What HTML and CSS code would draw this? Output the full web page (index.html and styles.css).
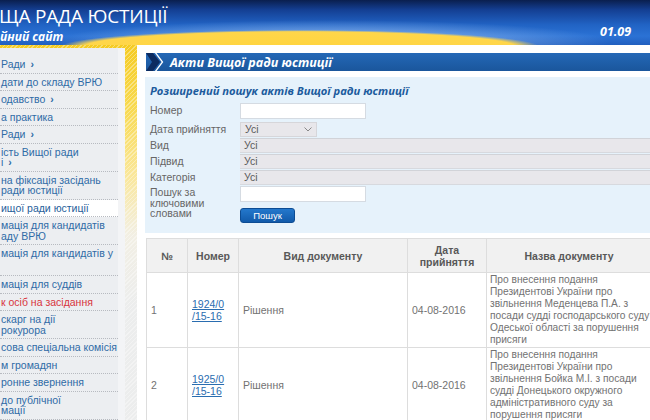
FILE: index.html
```html
<!DOCTYPE html>
<html lang="uk">
<head>
<meta charset="utf-8">
<title>Акти Вищої ради юстиції</title>
<link rel="stylesheet" href="styles.css">
</head>
<body>
<header class="header">
  <div class="brand">
    <div class="title">ЩА РАДА ЮСТИЦІЇ</div>
    <div class="subtitle">йний сайт</div>
  </div>
  <div class="date">01.09</div>
</header>
<div class="layout">
  <nav class="sidebar">
    <ul class="nav">
      <li>Ради <b>›</b></li>
      <li>дати до складу ВРЮ</li>
      <li>одавство <b>›</b></li>
      <li>а практика</li>
      <li>Ради <b>›</b></li>
      <li>ість Вищої ради<br>і <b>›</b></li>
      <li>на фіксація засідань<br>ради юстиції</li>
      <li class="active">ищої ради юстиції</li>
      <li>мація для кандидатів<br>аду ВРЮ</li>
      <li class="tall">мація для кандидатів у<br>&nbsp;</li>
      <li>мація для суддів</li>
      <li class="red">к осіб на засідання</li>
      <li>скарг на дії<br>рокурора</li>
      <li>сова спеціальна комісія</li>
      <li>м громадян</li>
      <li>ронне звернення</li>
      <li>до публічної<br>мації</li>
    </ul>
  </nav>
  <main class="main">
    <div class="titlebar">
      <svg class="chev" width="18" height="18" viewBox="0 0 18 18"><polygon points="0,0 7,0 14,9 7,18 0,18 6,9" fill="#0c2b60"/><polyline points="9,-1 16.5,9 9,19" fill="none" stroke="#ffffff" stroke-width="1.3"/></svg>
      <span class="titlebar-text">Акти Вищої ради юстиції</span>
    </div>
    <section class="search">
      <h2 class="search-title">Розширений пошук актів Вищої ради юстиції</h2>
      <div class="row row-first">
        <div class="label">Номер</div>
        <div class="input short"></div>
      </div>
      <div class="row row-date">
        <div class="label">Дата прийняття</div>
        <div class="select short-select">Усі<svg class="caret" width="8" height="5" viewBox="0 0 8 5"><polyline points="0.5,0.5 4,4 7.5,0.5" fill="none" stroke="#888" stroke-width="1"/></svg></div>
      </div>
      <div class="row">
        <div class="label">Вид</div>
        <div class="select wide">Усі</div>
      </div>
      <div class="row">
        <div class="label">Підвид</div>
        <div class="select wide">Усі</div>
      </div>
      <div class="row">
        <div class="label">Категорія</div>
        <div class="select wide">Усі</div>
      </div>
      <div class="row row-keywords">
        <div class="label label-multi">Пошук за<br>ключовими<br>словами</div>
        <div class="controls">
          <div class="input short"></div>
          <div class="button">Пошук</div>
        </div>
      </div>
    </section>
    <table class="acts">
      <colgroup>
        <col class="c-num"><col class="c-id"><col class="c-kind"><col class="c-date"><col class="c-name">
      </colgroup>
      <thead>
        <tr>
          <th>№</th>
          <th>Номер</th>
          <th>Вид документу</th>
          <th>Дата<br>прийняття</th>
          <th>Назва документу</th>
        </tr>
      </thead>
      <tbody>
        <tr>
          <td>1</td>
          <td><a class="doc-link" href="#">1924/0<br>/15-16</a></td>
          <td>Рішення</td>
          <td>04-08-2016</td>
          <td class="name">Про внесення подання<br>Президентові України про<br>звільнення Меденцева П.А. з<br>посади судді господарського суду<br>Одеської області за порушення<br>присяги</td>
        </tr>
        <tr>
          <td>2</td>
          <td><a class="doc-link" href="#">1925/0<br>/15-16</a></td>
          <td>Рішення</td>
          <td>04-08-2016</td>
          <td class="name">Про внесення подання<br>Президентові України про<br>звільнення Бойка М.І. з посади<br>судді Донецького окружного<br>адміністративного суду за<br>порушення присяги</td>
        </tr>
      </tbody>
    </table>
  </main>
</div>
</body>
</html>
```
FILE: styles.css
```css
html, body {
  margin: 0;
  padding: 0;
  overflow: hidden;
}
body {
  width: 650px;
  height: 420px;
  font-family: "Liberation Sans", Arial, sans-serif;
  font-size: 10.5px;
  background: #ffffff;
}

/* Header */
.header {
  height: 45px;
  display: flex;
  overflow: hidden;
  color: #ffffff;
  background:
    radial-gradient(ellipse 240px 17px at 300px 47px, #ffd43d 0, #ffd64a 90%, rgba(255, 214, 74, 0) 100%),
    radial-gradient(ellipse 280px 22px at 330px 42px, rgba(200, 225, 255, 0.75) 0, rgba(200, 225, 255, 0) 100%),
    linear-gradient(180deg, #0a1f4e 0, #143f93 22%, #2163c4 55%, #2b72d5 80%, #215fbf 100%);
}
.brand {
  flex: 0 0 600px;
  padding-top: 4px;
}
.title {
  font-family: "Open Sans", "Liberation Sans", sans-serif;
  font-size: 19px;
  line-height: 24px;
  margin-left: -1px;
  letter-spacing: -0.2px;
}
.subtitle {
  margin-top: 2px;
  font-family: "Open Sans", "Liberation Sans", sans-serif;
  font-weight: 700;
  font-style: italic;
  font-size: 12px;
  line-height: 13px;
}
.date {
  padding-top: 23px;
  font-family: "Open Sans", "Liberation Sans", sans-serif;
  font-weight: 700;
  font-style: italic;
  font-size: 12.5px;
  white-space: nowrap;
}

/* Layout */
.layout {
  display: flex;
  align-items: flex-start;
  height: 375px;
  background:
    repeating-linear-gradient(135deg, rgba(255, 255, 255, 0.35) 0 1px, rgba(255, 255, 255, 0) 1px 3px),
    linear-gradient(180deg, #f5cb22 0, #f8d94e 60px, #fae79a 130px, #f2efe4 190px, #eceded 260px);
}
.sidebar {
  flex: 0 0 125px;
  margin-top: 3px;
  height: 372px;
  background:
    linear-gradient(90deg, #eceef1 0, #eceef1 118px, #f3f4f6 118px);
}
.nav {
  list-style: none;
  margin: 0;
  padding: 8px 0 0;
  width: 118px;
}
.nav li {
  padding: 3px 0 3px 1px;
  line-height: 10.5px;
  font-size: 10.5px;
  color: #2f6ba6;
  border-bottom: 1px dotted #b7bac0;
  white-space: nowrap;
  overflow: hidden;
}
.nav li.tall {
  padding-bottom: 6px;
}
.nav li b {
  font-weight: 700;
  padding-left: 2px;
}
.nav li.active {
  background: #ffffff;
  color: #27609a;
}
.nav li.red {
  color: #d8343c;
}

.main {
  flex: 1;
  margin-left: 12px;
  height: 375px;
  background: #ffffff;
  padding: 8px 0 0 9px;
  overflow: hidden;
}

/* Title bar */
.titlebar {
  height: 18px;
  display: flex;
  align-items: center;
  background: linear-gradient(180deg, #2468b6 0, #1a569c 100%);
}
.chev {
  flex: 0 0 18px;
  display: block;
}
.titlebar-text {
  margin-left: 6px;
  font-family: "Open Sans", "Liberation Sans", sans-serif;
  font-weight: 700;
  font-style: italic;
  font-size: 12.5px;
  color: #ffffff;
  white-space: nowrap;
}

/* Search panel */
.search {
  margin-top: 6px;
  margin-left: -1px;
  background: #e6f2fb;
  padding: 7px 0 9px 5px;
}
.search-title {
  margin: 0 0 5px;
  font-family: "Open Sans", "Liberation Sans", sans-serif;
  font-weight: 700;
  font-style: italic;
  font-size: 11.2px;
  line-height: 14px;
  color: #1c5b9d;
  white-space: nowrap;
}
.row {
  display: flex;
  align-items: flex-start;
  margin-bottom: 1px;
}
.row-first {
  margin-bottom: 3px;
}
.label {
  flex: 0 0 90px;
  color: #666666;
  font-size: 10.5px;
  line-height: 15px;
}
.label-multi {
  line-height: 10.5px;
  padding-top: 1px;
}
.input {
  height: 14px;
  background: #ffffff;
  border: 1px solid #d5dbe2;
  box-sizing: content-box;
}
.short {
  width: 124px;
}
.select {
  height: 15px;
  box-sizing: border-box;
  background: #e8e7eb;
  border-top: 1px solid #d1d3d8;
  border-bottom: 1px solid #d7d9de;
  color: #5a5a5a;
  font-size: 10.5px;
  line-height: 13px;
  padding-left: 4px;
  display: flex;
  align-items: center;
}
.short-select {
  width: 77px;
  justify-content: space-between;
  padding-right: 4px;
  border: 1px solid #d6d6da;
}
.caret {
  display: block;
}
.wide {
  flex: 1;
}
.controls {
  display: flex;
  flex-direction: column;
  align-items: flex-start;
}
.button {
  margin-top: 6px;
  width: 55px;
  height: 15px;
  box-sizing: border-box;
  border: 1px solid #0d4c93;
  border-radius: 3px;
  background: linear-gradient(180deg, #2478cc 0, #115aaa 100%);
  color: #ffffff;
  font-size: 9.5px;
  line-height: 13px;
  text-align: center;
}

/* Table */
.acts {
  margin-top: 5px;
  border-collapse: collapse;
  table-layout: fixed;
  width: 505px;
  color: #727272;
  font-size: 10.5px;
}
.c-num { width: 41px; }
.c-id { width: 51px; }
.c-kind { width: 169px; }
.c-date { width: 79px; }
.c-name { width: 165px; }
.acts th,
.acts td {
  border: 1px solid #dddddd;
  line-height: 12px;
  vertical-align: middle;
}
.acts th {
  height: 33px;
  background: #f1f1f1;
  color: #585858;
  font-weight: 700;
  text-align: center;
  padding: 0 2px;
}
.acts td {
  padding: 1px 4px 1px 4px;
  text-align: left;
}
.acts td.name {
  padding: 1px 0 1px 3px;
  font-size: 10.2px;
  white-space: nowrap;
  overflow: hidden;
}
.acts tbody tr {
  height: 73px;
}
.doc-link {
  color: #2a6db0;
  text-decoration: underline;
}
```
